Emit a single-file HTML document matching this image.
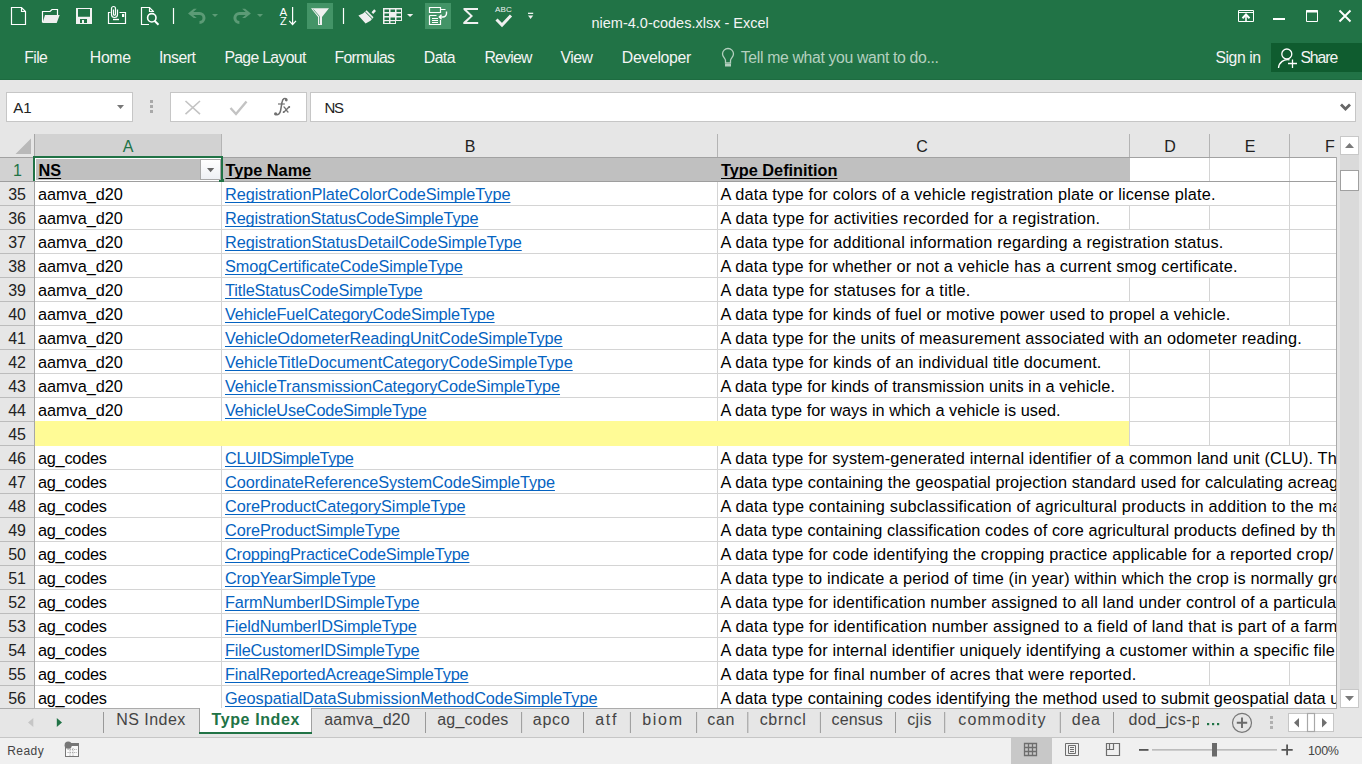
<!DOCTYPE html><html><head><meta charset="utf-8"><style>
*{margin:0;padding:0;box-sizing:border-box}
html,body{width:1362px;height:764px;overflow:hidden;background:#e6e6e6;font-family:"Liberation Sans",sans-serif}
.a{position:absolute}
.t{position:absolute;white-space:pre;line-height:1}
u{text-decoration-skip-ink:none;text-decoration-thickness:1px;text-underline-offset:2px}
svg{position:absolute;left:0;top:0}
</style></head><body><div class="a" style="left:0;top:0;width:1362px;height:80px;background:#217346"></div>
<div class="a" style="left:0;top:79px;width:1362px;height:1px;background:#1d6b40"></div>
<div class="a" style="left:307px;top:3px;width:26px;height:26px;background:#439467"></div>
<div class="a" style="left:425px;top:3px;width:26px;height:26px;background:#439467"></div>
<div class="a" style="left:1271px;top:43px;width:91px;height:29px;background:#0f5c2f"></div>
<svg width="1362" height="80" viewBox="0 0 1362 80">
<g fill="none" stroke="#ffffff" stroke-width="1.2">
 <path d="M11.5 7.5H21.5L25.5 11.5V24.5H11.5Z M21.5 7.5V11.5H25.5"/>
 <path d="M42.5 22.5V11.5H50L52 9.5H57.5V15"/>
 <path d="M110.5 12.5H108.5V23.5H125.5V12.5H119.5"/>
 <path d="M113 19.5H119" stroke-width="1.4"/>
 <path d="M117.5 9.5V14.5A3 3 0 0 1 111.5 14.5V8.5A2 2 0 0 1 115.5 8.5V14.2A1 1 0 0 1 113.5 14.2V9.5"/>
 <path d="M153.5 12V11.5L149.5 7.5H141.5V24.5H149"/>
 <path d="M149.5 7.5V11.5H153.5"/>
 <circle cx="151.8" cy="17.8" r="4.2" stroke-width="1.6"/>
 <path d="M154.5 20.8L158.5 24.8" stroke-width="2"/>
 <path d="M173.5 8V24M343.5 8V24"/>
 <path d="M292.6 7V24.5M289.2 20.8L292.6 24.5L296 20.8"/>
 <path d="M429.5 7.5H440.5V12.5H429.5Z M440.5 9.5H445.5 M429.5 15.5H436.5 M440.5 20V24.5H429.5V15.5 M432 18.5H438 M432 20.5H438 M432 22.5H438"/>
 <path d="M446.5 11.5V13.5A3.5 3.5 0 0 1 443 17H439.5M441.5 14.8L439.3 17L441.5 19.2" stroke-width="1.4"/>
 <path d="M528 13.3H533.2"/>
</g>
<path d="M45 15H59.7L56.7 22.9H42.5Z" fill="#efefef"/>
<path d="M76 8H92V24H76Z M78 9V16.8H90V9Z M80 19V23H82V20H84V23H87V19Z" fill="#f2f2f2" fill-rule="evenodd"/>
<rect x="122" y="14" width="2.2" height="3" fill="#ffffff"/>
<g fill="#5c9b76">
 <path d="M188 13.4L193.8 8.8H196.8L193.2 12H199.5A6 6 0 0 1 199.5 24V21A3 3 0 0 0 199.5 15H193.2L196.8 18H193.8Z"/>
 <path d="M212 14H218L215 17.1Z M257 14H263L260 17.1Z"/>
 <path d="M250.9 13.4L245.1 8.8H242.1L245.7 12H239.4A6 6 0 0 0 239.4 24V21A3 3 0 0 1 239.4 15H245.7L242.1 18H245.1Z"/>
</g>
<path d="M407 14H413.2L410.1 17Z" fill="#f0f0f0"/>
<path d="M528 15.4H533.2L530.6 18.9Z" fill="#f0f0f0"/>
<path d="M311 8.2H329L322 17V25H318V17Z" fill="#f0f0f0"/>
<path d="M313.5 9.5L319.5 16.5V24" stroke="#43956a" stroke-width="0.8" fill="none"/>
<text x="279.5" y="16" font-family="Liberation Sans" font-size="11.5" fill="#ffffff">A</text>
<text x="280" y="25" font-family="Liberation Sans" font-size="11" fill="#ffffff">Z</text>
<path d="M358.4 15.4L363 13.4L366.6 10.3L373.5 17.3L370.5 20.8L365.6 23.4Z M371.5 12.2L374.2 9.2L376 11L373.2 14Z" fill="#f0f0f0"/>
<path d="M365.2 11.8L372 18.6" stroke="#217346" stroke-width="1"/>
<rect x="383" y="8" width="19" height="16" fill="#f0f0f0"/>
<g fill="#217346">
 <rect x="384.5" y="9.5" width="4.5" height="2.5"/><rect x="390.5" y="9.5" width="4.5" height="2.5"/><rect x="396.5" y="9.5" width="4.5" height="2.5"/>
 <rect x="384.5" y="13.5" width="4.5" height="2.5"/><rect x="396.5" y="13.5" width="4.5" height="2.5"/>
 <rect x="384.5" y="17.5" width="4.5" height="2.5"/><rect x="390.5" y="17.5" width="4.5" height="2.5"/><rect x="396.5" y="17.5" width="4.5" height="2.5"/>
 <rect x="384.5" y="21.2" width="4.5" height="1.8"/><rect x="390.5" y="21.2" width="4.5" height="1.8"/>
 <path d="M396 21H402V24H396Z"/>
</g>
<path d="M463.5 8H478V10H466.8L473 16L466.8 22H478.2V24H463.3V22.3L470.2 16L463.5 9.8Z" fill="#f0f0f0"/>
<text x="495" y="11.9" font-family="Liberation Sans" font-size="8" font-weight="400" fill="#f0f0f0" letter-spacing="0.2">ABC</text>
<path d="M496.5 19.5L502 25L511 15.5" stroke="#f0f0f0" stroke-width="3" fill="none"/>
<!-- window controls -->
<g fill="none" stroke="#ffffff" stroke-width="1">
 <path d="M1238.5 10.5H1253.5V21.5H1238.5Z M1238.5 12.5H1253.5"/>
 <path d="M1246 21.5V15.5" stroke-width="1.6"/><path d="M1242.5 18.2L1246 14.5L1249.5 18.2" stroke-width="2"/>
 <path d="M1306.5 10.5H1317.5V21.5H1306.5Z"/>
 <path d="M1306 11.5H1318" stroke-width="2"/>
 <path d="M1339.5 10.5L1350.5 21.5M1350.5 10.5L1339.5 21.5" stroke-width="1.9"/>
</g>
<rect x="1273" y="18" width="12" height="2" fill="#ffffff"/>
<!-- lightbulb -->
<g fill="none" stroke="#b4d0bf" stroke-width="1.3">
 <path d="M725.5 63V60.5C725.5 58.5 722.5 57 722.5 54A5.5 5.5 0 0 1 733.5 54C733.5 57 730.5 58.5 730.5 60.5V63Z"/>
</g>
<rect x="725" y="64" width="6" height="2.5" fill="#b4d0bf"/>
<!-- share person -->
<g fill="none" stroke="#ffffff" stroke-width="1.3">
 <circle cx="1286.8" cy="54" r="5"/>
 <path d="M1278.5 68A9 9 0 0 1 1289.5 59.8"/>
 <path d="M1292.5 59.5V68M1288 63.5H1297"/>
</g>
</svg>
<div class="t" style="left:591.5px;top:15.73px;font-size:14.5px;color:#f4f4f4;font-weight:400;">niem-4.0-codes.xlsx - Excel</div>
<div class="t" style="left:24.3px;top:50.33px;font-size:15.8px;color:#f4f4f4;font-weight:400;letter-spacing:-0.623px;">File</div>
<div class="t" style="left:89.8px;top:49.73px;font-size:15.8px;color:#f4f4f4;font-weight:400;letter-spacing:-0.314px;">Home</div>
<div class="t" style="left:158.9px;top:49.73px;font-size:15.8px;color:#f4f4f4;font-weight:400;letter-spacing:-0.503px;">Insert</div>
<div class="t" style="left:224.4px;top:49.73px;font-size:15.8px;color:#f4f4f4;font-weight:400;letter-spacing:-0.682px;">Page Layout</div>
<div class="t" style="left:334.6px;top:49.73px;font-size:15.8px;color:#f4f4f4;font-weight:400;letter-spacing:-0.778px;">Formulas</div>
<div class="t" style="left:423.8px;top:49.73px;font-size:15.8px;color:#f4f4f4;font-weight:400;letter-spacing:-0.558px;">Data</div>
<div class="t" style="left:484.40000000000003px;top:49.73px;font-size:15.8px;color:#f4f4f4;font-weight:400;letter-spacing:-0.779px;">Review</div>
<div class="t" style="left:560.4px;top:49.73px;font-size:15.8px;color:#f4f4f4;font-weight:400;letter-spacing:-0.490px;">View</div>
<div class="t" style="left:621.8000000000001px;top:49.73px;font-size:15.8px;color:#f4f4f4;font-weight:400;letter-spacing:-0.314px;">Developer</div>
<div class="t" style="left:740.8000000000001px;top:49.73px;font-size:15.8px;color:#b4d0bf;font-weight:400;letter-spacing:-0.342px;">Tell me what you want to do...</div>
<div class="t" style="left:1215.5px;top:49.63px;font-size:15.8px;color:#f4f4f4;font-weight:400;letter-spacing:-0.469px;">Sign in</div>
<div class="t" style="left:1300.3999999999999px;top:49.63px;font-size:15.8px;color:#f4f4f4;font-weight:400;letter-spacing:-1.064px;">Share</div>
<div class="a" style="left:6px;top:92px;width:127px;height:30px;background:#fff;border:1px solid #c6c6c6"></div>
<div class="t" style="left:13.2px;top:100.10px;font-size:15px;color:#222;font-weight:400;">A1</div>
<svg width="1362" height="764" style="left:0;top:0"><path d="M117 105H124L120.5 109Z" fill="#777"/><rect x="150" y="100" width="3" height="3" fill="#a9a9a9"/><rect x="150" y="105" width="3" height="3" fill="#a9a9a9"/><rect x="150" y="110" width="3" height="3" fill="#a9a9a9"/></svg>
<div class="a" style="left:170px;top:92px;width:137px;height:30px;background:#fff;border:1px solid #c6c6c6"></div>
<div class="a" style="left:310px;top:92px;width:1046px;height:30px;background:#fff;border:1px solid #c6c6c6"></div>
<svg width="1362" height="764" style="left:0;top:0"><path d="M185.5 101L200 114.2M200 101L185.5 114.2" stroke="#c3c3c3" stroke-width="1.6" fill="none"/><path d="M230.5 108L236 114L246.5 101.5" stroke="#c3c3c3" stroke-width="2.4" fill="none"/><path d="M1341 104.5L1345.5 109L1350 104.5" stroke="#666" stroke-width="2.8" fill="none"/></svg>
<svg width="1362" height="764" style="left:0;top:0"><g fill="none" stroke="#707070"><path d="M286.6 99.2C285 97.6 282.6 98.4 282 102.5L280.6 110.5C280.1 113.6 277.8 115.6 275.4 114.2" stroke-width="1.5"/><path d="M278 104H284.8" stroke-width="1.2"/><path d="M283.6 106.6C285.2 107.2 286.6 111.4 288.4 112.4M289.6 106.6C288 107.4 285.6 111.2 283.2 112.4" stroke-width="1.3"/></g><g fill="#707070"><circle cx="286.3" cy="100" r="1.4"/><circle cx="275.6" cy="113.8" r="1.6"/><circle cx="289.3" cy="107" r="0.9"/><circle cx="283.6" cy="112.2" r="0.9"/></g></svg>
<div class="t" style="left:324.5px;top:99.90px;font-size:15px;color:#222;font-weight:400;letter-spacing:-1.244px;">NS</div>
<div class="a" style="left:0;top:0;width:1336px;height:708px;overflow:hidden"><div class="a" style="left:35px;top:134px;width:186px;height:23px;background:#d2d2d2"></div>
<div class="a" style="left:221px;top:134px;width:1px;height:23px;background:#b4b4b4"></div>
<div class="a" style="left:717px;top:134px;width:1px;height:23px;background:#b4b4b4"></div>
<div class="a" style="left:1129px;top:134px;width:1px;height:23px;background:#b4b4b4"></div>
<div class="a" style="left:1209px;top:134px;width:1px;height:23px;background:#b4b4b4"></div>
<div class="a" style="left:1289px;top:134px;width:1px;height:23px;background:#b4b4b4"></div>
<div class="a" style="left:0;top:157px;width:1337px;height:1px;background:#a2a2a2"></div>
<svg width="40" height="160" style="left:0;top:0"><path d="M31 138.5V154H15.5Z" fill="#b9b9b9"/></svg>
<div class="t" style="left:108px;width:40px;text-align:center;top:139.46px;font-size:16px;color:#217346">A</div>
<div class="t" style="left:450px;width:40px;text-align:center;top:139.46px;font-size:16px;color:#222">B</div>
<div class="t" style="left:902px;width:40px;text-align:center;top:139.46px;font-size:16px;color:#222">C</div>
<div class="t" style="left:1150px;width:40px;text-align:center;top:139.46px;font-size:16px;color:#222">D</div>
<div class="t" style="left:1230px;width:40px;text-align:center;top:139.46px;font-size:16px;color:#222">E</div>
<div class="t" style="left:1310px;width:40px;text-align:center;top:139.46px;font-size:16px;color:#222">F</div>
<div class="a" style="left:35px;top:158px;width:1301px;height:550px;background:#fff"></div>
<div class="a" style="left:0;top:158px;width:34px;height:550px;background:#e6e6e6"></div>
<div class="a" style="left:0;top:158px;width:34px;height:23px;background:#d2d2d2"></div>
<div class="a" style="left:34px;top:134px;width:1px;height:574px;background:#a6a6a6"></div>
<div class="a" style="left:35px;top:158px;width:1095px;height:23px;background:#c0c0c0"></div>
<div class="a" style="left:1209px;top:158px;width:1px;height:23px;background:#d4d4d4"></div>
<div class="a" style="left:1289px;top:158px;width:1px;height:23px;background:#d4d4d4"></div>
<div class="a" style="left:0px;top:181px;width:1337px;height:1px;background:#9e9e9e"></div>
<div class="t" style="left:13px;top:163.26px;font-size:16px;color:#217346;font-weight:400;">1</div>
<div class="t" style="left:38.5px;top:162.20px;font-size:16.3px;color:#000;font-weight:700;"><u>NS</u></div>
<div class="t" style="left:225.5px;top:162.20px;font-size:16.3px;color:#000;font-weight:700;"><u>Type Name</u></div>
<div class="t" style="left:721px;top:162.20px;font-size:16.3px;color:#000;font-weight:700;"><u>Type Definition</u></div>
<div class="a" style="left:35px;top:205px;width:1301px;height:1px;background:#d4d4d4"></div>
<div class="a" style="left:0px;top:205px;width:34px;height:1px;background:#bcbcbc"></div>
<div class="t" style="left:0;width:26px;text-align:right;top:187.26px;font-size:16px;color:#222">35</div>
<div class="a" style="left:221px;top:182px;width:1px;height:23px;background:#d4d4d4"></div>
<div class="a" style="left:717px;top:182px;width:1px;height:23px;background:#d4d4d4"></div>
<div class="a" style="left:1289px;top:182px;width:1px;height:23px;background:#d4d4d4"></div>
<div class="t" style="left:38px;top:186.40px;font-size:16.3px;color:#000;font-weight:400;letter-spacing:-0.037px;">aamva_d20</div>
<div class="t" style="left:225px;top:186.40px;font-size:16.3px;color:#0563c1;font-weight:400;letter-spacing:-0.040px;"><u>RegistrationPlateColorCodeSimpleType</u></div>
<div class="t" style="left:720.5px;top:186.40px;font-size:16.3px;color:#000;font-weight:400;letter-spacing:0.164px;">A data type for colors of a vehicle registration plate or license plate.</div>
<div class="a" style="left:35px;top:229px;width:1301px;height:1px;background:#d4d4d4"></div>
<div class="a" style="left:0px;top:229px;width:34px;height:1px;background:#bcbcbc"></div>
<div class="t" style="left:0;width:26px;text-align:right;top:211.26px;font-size:16px;color:#222">36</div>
<div class="a" style="left:221px;top:206px;width:1px;height:23px;background:#d4d4d4"></div>
<div class="a" style="left:717px;top:206px;width:1px;height:23px;background:#d4d4d4"></div>
<div class="a" style="left:1129px;top:206px;width:1px;height:23px;background:#d4d4d4"></div>
<div class="a" style="left:1209px;top:206px;width:1px;height:23px;background:#d4d4d4"></div>
<div class="a" style="left:1289px;top:206px;width:1px;height:23px;background:#d4d4d4"></div>
<div class="t" style="left:38px;top:210.40px;font-size:16.3px;color:#000;font-weight:400;letter-spacing:-0.037px;">aamva_d20</div>
<div class="t" style="left:225px;top:210.40px;font-size:16.3px;color:#0563c1;font-weight:400;letter-spacing:-0.114px;"><u>RegistrationStatusCodeSimpleType</u></div>
<div class="t" style="left:720.5px;top:210.40px;font-size:16.3px;color:#000;font-weight:400;letter-spacing:0.226px;">A data type for activities recorded for a registration.</div>
<div class="a" style="left:35px;top:253px;width:1301px;height:1px;background:#d4d4d4"></div>
<div class="a" style="left:0px;top:253px;width:34px;height:1px;background:#bcbcbc"></div>
<div class="t" style="left:0;width:26px;text-align:right;top:235.26px;font-size:16px;color:#222">37</div>
<div class="a" style="left:221px;top:230px;width:1px;height:23px;background:#d4d4d4"></div>
<div class="a" style="left:717px;top:230px;width:1px;height:23px;background:#d4d4d4"></div>
<div class="a" style="left:1289px;top:230px;width:1px;height:23px;background:#d4d4d4"></div>
<div class="t" style="left:38px;top:234.40px;font-size:16.3px;color:#000;font-weight:400;letter-spacing:-0.037px;">aamva_d20</div>
<div class="t" style="left:225px;top:234.40px;font-size:16.3px;color:#0563c1;font-weight:400;letter-spacing:-0.050px;"><u>RegistrationStatusDetailCodeSimpleType</u></div>
<div class="t" style="left:720.5px;top:234.40px;font-size:16.3px;color:#000;font-weight:400;letter-spacing:0.201px;">A data type for additional information regarding a registration status.</div>
<div class="a" style="left:35px;top:277px;width:1301px;height:1px;background:#d4d4d4"></div>
<div class="a" style="left:0px;top:277px;width:34px;height:1px;background:#bcbcbc"></div>
<div class="t" style="left:0;width:26px;text-align:right;top:259.26px;font-size:16px;color:#222">38</div>
<div class="a" style="left:221px;top:254px;width:1px;height:23px;background:#d4d4d4"></div>
<div class="a" style="left:717px;top:254px;width:1px;height:23px;background:#d4d4d4"></div>
<div class="a" style="left:1289px;top:254px;width:1px;height:23px;background:#d4d4d4"></div>
<div class="t" style="left:38px;top:258.40px;font-size:16.3px;color:#000;font-weight:400;letter-spacing:-0.037px;">aamva_d20</div>
<div class="t" style="left:225px;top:258.40px;font-size:16.3px;color:#0563c1;font-weight:400;letter-spacing:-0.072px;"><u>SmogCertificateCodeSimpleType</u></div>
<div class="t" style="left:720.5px;top:258.40px;font-size:16.3px;color:#000;font-weight:400;letter-spacing:0.168px;">A data type for whether or not a vehicle has a current smog certificate.</div>
<div class="a" style="left:35px;top:301px;width:1301px;height:1px;background:#d4d4d4"></div>
<div class="a" style="left:0px;top:301px;width:34px;height:1px;background:#bcbcbc"></div>
<div class="t" style="left:0;width:26px;text-align:right;top:283.26px;font-size:16px;color:#222">39</div>
<div class="a" style="left:221px;top:278px;width:1px;height:23px;background:#d4d4d4"></div>
<div class="a" style="left:717px;top:278px;width:1px;height:23px;background:#d4d4d4"></div>
<div class="a" style="left:1129px;top:278px;width:1px;height:23px;background:#d4d4d4"></div>
<div class="a" style="left:1209px;top:278px;width:1px;height:23px;background:#d4d4d4"></div>
<div class="a" style="left:1289px;top:278px;width:1px;height:23px;background:#d4d4d4"></div>
<div class="t" style="left:38px;top:282.40px;font-size:16.3px;color:#000;font-weight:400;letter-spacing:-0.037px;">aamva_d20</div>
<div class="t" style="left:225px;top:282.40px;font-size:16.3px;color:#0563c1;font-weight:400;letter-spacing:-0.112px;"><u>TitleStatusCodeSimpleType</u></div>
<div class="t" style="left:720.5px;top:282.40px;font-size:16.3px;color:#000;font-weight:400;letter-spacing:0.229px;">A data type for statuses for a title.</div>
<div class="a" style="left:35px;top:325px;width:1301px;height:1px;background:#d4d4d4"></div>
<div class="a" style="left:0px;top:325px;width:34px;height:1px;background:#bcbcbc"></div>
<div class="t" style="left:0;width:26px;text-align:right;top:307.26px;font-size:16px;color:#222">40</div>
<div class="a" style="left:221px;top:302px;width:1px;height:23px;background:#d4d4d4"></div>
<div class="a" style="left:717px;top:302px;width:1px;height:23px;background:#d4d4d4"></div>
<div class="a" style="left:1289px;top:302px;width:1px;height:23px;background:#d4d4d4"></div>
<div class="t" style="left:38px;top:306.40px;font-size:16.3px;color:#000;font-weight:400;letter-spacing:-0.037px;">aamva_d20</div>
<div class="t" style="left:225px;top:306.40px;font-size:16.3px;color:#0563c1;font-weight:400;letter-spacing:-0.139px;"><u>VehicleFuelCategoryCodeSimpleType</u></div>
<div class="t" style="left:720.5px;top:306.40px;font-size:16.3px;color:#000;font-weight:400;letter-spacing:0.170px;">A data type for kinds of fuel or motive power used to propel a vehicle.</div>
<div class="a" style="left:35px;top:349px;width:1301px;height:1px;background:#d4d4d4"></div>
<div class="a" style="left:0px;top:349px;width:34px;height:1px;background:#bcbcbc"></div>
<div class="t" style="left:0;width:26px;text-align:right;top:331.26px;font-size:16px;color:#222">41</div>
<div class="a" style="left:221px;top:326px;width:1px;height:23px;background:#d4d4d4"></div>
<div class="a" style="left:717px;top:326px;width:1px;height:23px;background:#d4d4d4"></div>
<div class="t" style="left:38px;top:330.40px;font-size:16.3px;color:#000;font-weight:400;letter-spacing:-0.037px;">aamva_d20</div>
<div class="t" style="left:225px;top:330.40px;font-size:16.3px;color:#0563c1;font-weight:400;letter-spacing:-0.023px;"><u>VehicleOdometerReadingUnitCodeSimpleType</u></div>
<div class="t" style="left:720.5px;top:330.40px;font-size:16.3px;color:#000;font-weight:400;letter-spacing:0.170px;">A data type for the units of measurement associated with an odometer reading.</div>
<div class="a" style="left:35px;top:373px;width:1301px;height:1px;background:#d4d4d4"></div>
<div class="a" style="left:0px;top:373px;width:34px;height:1px;background:#bcbcbc"></div>
<div class="t" style="left:0;width:26px;text-align:right;top:355.26px;font-size:16px;color:#222">42</div>
<div class="a" style="left:221px;top:350px;width:1px;height:23px;background:#d4d4d4"></div>
<div class="a" style="left:717px;top:350px;width:1px;height:23px;background:#d4d4d4"></div>
<div class="a" style="left:1129px;top:350px;width:1px;height:23px;background:#d4d4d4"></div>
<div class="a" style="left:1209px;top:350px;width:1px;height:23px;background:#d4d4d4"></div>
<div class="a" style="left:1289px;top:350px;width:1px;height:23px;background:#d4d4d4"></div>
<div class="t" style="left:38px;top:354.40px;font-size:16.3px;color:#000;font-weight:400;letter-spacing:-0.037px;">aamva_d20</div>
<div class="t" style="left:225px;top:354.40px;font-size:16.3px;color:#0563c1;font-weight:400;letter-spacing:0.019px;"><u>VehicleTitleDocumentCategoryCodeSimpleType</u></div>
<div class="t" style="left:720.5px;top:354.40px;font-size:16.3px;color:#000;font-weight:400;letter-spacing:0.185px;">A data type for kinds of an individual title document.</div>
<div class="a" style="left:35px;top:397px;width:1301px;height:1px;background:#d4d4d4"></div>
<div class="a" style="left:0px;top:397px;width:34px;height:1px;background:#bcbcbc"></div>
<div class="t" style="left:0;width:26px;text-align:right;top:379.26px;font-size:16px;color:#222">43</div>
<div class="a" style="left:221px;top:374px;width:1px;height:23px;background:#d4d4d4"></div>
<div class="a" style="left:717px;top:374px;width:1px;height:23px;background:#d4d4d4"></div>
<div class="a" style="left:1129px;top:374px;width:1px;height:23px;background:#d4d4d4"></div>
<div class="a" style="left:1209px;top:374px;width:1px;height:23px;background:#d4d4d4"></div>
<div class="a" style="left:1289px;top:374px;width:1px;height:23px;background:#d4d4d4"></div>
<div class="t" style="left:38px;top:378.40px;font-size:16.3px;color:#000;font-weight:400;letter-spacing:-0.037px;">aamva_d20</div>
<div class="t" style="left:225px;top:378.40px;font-size:16.3px;color:#0563c1;font-weight:400;letter-spacing:-0.091px;"><u>VehicleTransmissionCategoryCodeSimpleType</u></div>
<div class="t" style="left:720.5px;top:378.40px;font-size:16.3px;color:#000;font-weight:400;letter-spacing:0.062px;">A data type for kinds of transmission units in a vehicle.</div>
<div class="a" style="left:35px;top:421px;width:1301px;height:1px;background:#d4d4d4"></div>
<div class="a" style="left:0px;top:421px;width:34px;height:1px;background:#bcbcbc"></div>
<div class="t" style="left:0;width:26px;text-align:right;top:403.26px;font-size:16px;color:#222">44</div>
<div class="a" style="left:221px;top:398px;width:1px;height:23px;background:#d4d4d4"></div>
<div class="a" style="left:717px;top:398px;width:1px;height:23px;background:#d4d4d4"></div>
<div class="a" style="left:1129px;top:398px;width:1px;height:23px;background:#d4d4d4"></div>
<div class="a" style="left:1209px;top:398px;width:1px;height:23px;background:#d4d4d4"></div>
<div class="a" style="left:1289px;top:398px;width:1px;height:23px;background:#d4d4d4"></div>
<div class="t" style="left:38px;top:402.40px;font-size:16.3px;color:#000;font-weight:400;letter-spacing:-0.037px;">aamva_d20</div>
<div class="t" style="left:225px;top:402.40px;font-size:16.3px;color:#0563c1;font-weight:400;letter-spacing:-0.163px;"><u>VehicleUseCodeSimpleType</u></div>
<div class="t" style="left:720.5px;top:402.40px;font-size:16.3px;color:#000;font-weight:400;letter-spacing:0.015px;">A data type for ways in which a vehicle is used.</div>
<div class="a" style="left:35px;top:445px;width:1301px;height:1px;background:#d4d4d4"></div>
<div class="a" style="left:0px;top:445px;width:34px;height:1px;background:#bcbcbc"></div>
<div class="t" style="left:0;width:26px;text-align:right;top:427.26px;font-size:16px;color:#222">45</div>
<div class="a" style="left:35px;top:421px;width:1094px;height:25px;background:#fffb96"></div>
<div class="a" style="left:1129px;top:422px;width:1px;height:23px;background:#d4d4d4"></div>
<div class="a" style="left:1209px;top:422px;width:1px;height:23px;background:#d4d4d4"></div>
<div class="a" style="left:1289px;top:422px;width:1px;height:23px;background:#d4d4d4"></div>
<div class="a" style="left:35px;top:469px;width:1301px;height:1px;background:#d4d4d4"></div>
<div class="a" style="left:0px;top:469px;width:34px;height:1px;background:#bcbcbc"></div>
<div class="t" style="left:0;width:26px;text-align:right;top:451.26px;font-size:16px;color:#222">46</div>
<div class="a" style="left:221px;top:446px;width:1px;height:23px;background:#d4d4d4"></div>
<div class="a" style="left:717px;top:446px;width:1px;height:23px;background:#d4d4d4"></div>
<div class="t" style="left:38px;top:450.40px;font-size:16.3px;color:#000;font-weight:400;letter-spacing:-0.246px;">ag_codes</div>
<div class="t" style="left:225px;top:450.40px;font-size:16.3px;color:#0563c1;font-weight:400;letter-spacing:-0.366px;"><u>CLUIDSimpleType</u></div>
<div class="t" style="left:720.5px;top:450.40px;font-size:16.3px;color:#000;font-weight:400;letter-spacing:0.145px;">A data type for system-generated internal identifier of a common land unit (CLU). The identifier</div>
<div class="a" style="left:35px;top:493px;width:1301px;height:1px;background:#d4d4d4"></div>
<div class="a" style="left:0px;top:493px;width:34px;height:1px;background:#bcbcbc"></div>
<div class="t" style="left:0;width:26px;text-align:right;top:475.26px;font-size:16px;color:#222">47</div>
<div class="a" style="left:221px;top:470px;width:1px;height:23px;background:#d4d4d4"></div>
<div class="a" style="left:717px;top:470px;width:1px;height:23px;background:#d4d4d4"></div>
<div class="t" style="left:38px;top:474.40px;font-size:16.3px;color:#000;font-weight:400;letter-spacing:-0.246px;">ag_codes</div>
<div class="t" style="left:225px;top:474.40px;font-size:16.3px;color:#0563c1;font-weight:400;letter-spacing:-0.080px;"><u>CoordinateReferenceSystemCodeSimpleType</u></div>
<div class="t" style="left:720.5px;top:474.40px;font-size:16.3px;color:#000;font-weight:400;letter-spacing:0.112px;">A data type containing the geospatial projection standard used for calculating acreage</div>
<div class="a" style="left:35px;top:517px;width:1301px;height:1px;background:#d4d4d4"></div>
<div class="a" style="left:0px;top:517px;width:34px;height:1px;background:#bcbcbc"></div>
<div class="t" style="left:0;width:26px;text-align:right;top:499.26px;font-size:16px;color:#222">48</div>
<div class="a" style="left:221px;top:494px;width:1px;height:23px;background:#d4d4d4"></div>
<div class="a" style="left:717px;top:494px;width:1px;height:23px;background:#d4d4d4"></div>
<div class="t" style="left:38px;top:498.40px;font-size:16.3px;color:#000;font-weight:400;letter-spacing:-0.246px;">ag_codes</div>
<div class="t" style="left:225px;top:498.40px;font-size:16.3px;color:#0563c1;font-weight:400;letter-spacing:-0.073px;"><u>CoreProductCategorySimpleType</u></div>
<div class="t" style="left:720.5px;top:498.40px;font-size:16.3px;color:#000;font-weight:400;letter-spacing:0.198px;">A data type containing subclassification of agricultural products in addition to the main</div>
<div class="a" style="left:35px;top:541px;width:1301px;height:1px;background:#d4d4d4"></div>
<div class="a" style="left:0px;top:541px;width:34px;height:1px;background:#bcbcbc"></div>
<div class="t" style="left:0;width:26px;text-align:right;top:523.26px;font-size:16px;color:#222">49</div>
<div class="a" style="left:221px;top:518px;width:1px;height:23px;background:#d4d4d4"></div>
<div class="a" style="left:717px;top:518px;width:1px;height:23px;background:#d4d4d4"></div>
<div class="t" style="left:38px;top:522.40px;font-size:16.3px;color:#000;font-weight:400;letter-spacing:-0.246px;">ag_codes</div>
<div class="t" style="left:225px;top:522.40px;font-size:16.3px;color:#0563c1;font-weight:400;letter-spacing:-0.083px;"><u>CoreProductSimpleType</u></div>
<div class="t" style="left:720.5px;top:522.40px;font-size:16.3px;color:#000;font-weight:400;letter-spacing:0.080px;">A data type containing classification codes of core agricultural products defined by the</div>
<div class="a" style="left:35px;top:565px;width:1301px;height:1px;background:#d4d4d4"></div>
<div class="a" style="left:0px;top:565px;width:34px;height:1px;background:#bcbcbc"></div>
<div class="t" style="left:0;width:26px;text-align:right;top:547.26px;font-size:16px;color:#222">50</div>
<div class="a" style="left:221px;top:542px;width:1px;height:23px;background:#d4d4d4"></div>
<div class="a" style="left:717px;top:542px;width:1px;height:23px;background:#d4d4d4"></div>
<div class="t" style="left:38px;top:546.40px;font-size:16.3px;color:#000;font-weight:400;letter-spacing:-0.246px;">ag_codes</div>
<div class="t" style="left:225px;top:546.40px;font-size:16.3px;color:#0563c1;font-weight:400;letter-spacing:-0.147px;"><u>CroppingPracticeCodeSimpleType</u></div>
<div class="t" style="left:720.5px;top:546.40px;font-size:16.3px;color:#000;font-weight:400;letter-spacing:0.162px;">A data type for code identifying the cropping practice applicable for a reported crop/</div>
<div class="a" style="left:35px;top:589px;width:1301px;height:1px;background:#d4d4d4"></div>
<div class="a" style="left:0px;top:589px;width:34px;height:1px;background:#bcbcbc"></div>
<div class="t" style="left:0;width:26px;text-align:right;top:571.26px;font-size:16px;color:#222">51</div>
<div class="a" style="left:221px;top:566px;width:1px;height:23px;background:#d4d4d4"></div>
<div class="a" style="left:717px;top:566px;width:1px;height:23px;background:#d4d4d4"></div>
<div class="t" style="left:38px;top:570.40px;font-size:16.3px;color:#000;font-weight:400;letter-spacing:-0.246px;">ag_codes</div>
<div class="t" style="left:225px;top:570.40px;font-size:16.3px;color:#0563c1;font-weight:400;letter-spacing:-0.156px;"><u>CropYearSimpleType</u></div>
<div class="t" style="left:720.5px;top:570.40px;font-size:16.3px;color:#000;font-weight:400;letter-spacing:0.161px;">A data type to indicate a period of time (in year) within which the crop is normally grown</div>
<div class="a" style="left:35px;top:613px;width:1301px;height:1px;background:#d4d4d4"></div>
<div class="a" style="left:0px;top:613px;width:34px;height:1px;background:#bcbcbc"></div>
<div class="t" style="left:0;width:26px;text-align:right;top:595.26px;font-size:16px;color:#222">52</div>
<div class="a" style="left:221px;top:590px;width:1px;height:23px;background:#d4d4d4"></div>
<div class="a" style="left:717px;top:590px;width:1px;height:23px;background:#d4d4d4"></div>
<div class="t" style="left:38px;top:594.40px;font-size:16.3px;color:#000;font-weight:400;letter-spacing:-0.246px;">ag_codes</div>
<div class="t" style="left:225px;top:594.40px;font-size:16.3px;color:#0563c1;font-weight:400;letter-spacing:-0.131px;"><u>FarmNumberIDSimpleType</u></div>
<div class="t" style="left:720.5px;top:594.40px;font-size:16.3px;color:#000;font-weight:400;letter-spacing:0.171px;">A data type for identification number assigned to all land under control of a particular</div>
<div class="a" style="left:35px;top:637px;width:1301px;height:1px;background:#d4d4d4"></div>
<div class="a" style="left:0px;top:637px;width:34px;height:1px;background:#bcbcbc"></div>
<div class="t" style="left:0;width:26px;text-align:right;top:619.26px;font-size:16px;color:#222">53</div>
<div class="a" style="left:221px;top:614px;width:1px;height:23px;background:#d4d4d4"></div>
<div class="a" style="left:717px;top:614px;width:1px;height:23px;background:#d4d4d4"></div>
<div class="t" style="left:38px;top:618.40px;font-size:16.3px;color:#000;font-weight:400;letter-spacing:-0.246px;">ag_codes</div>
<div class="t" style="left:225px;top:618.40px;font-size:16.3px;color:#0563c1;font-weight:400;letter-spacing:-0.129px;"><u>FieldNumberIDSimpleType</u></div>
<div class="t" style="left:720.5px;top:618.40px;font-size:16.3px;color:#000;font-weight:400;letter-spacing:0.215px;">A data type for identification number assigned to a field of land that is part of a farm</div>
<div class="a" style="left:35px;top:661px;width:1301px;height:1px;background:#d4d4d4"></div>
<div class="a" style="left:0px;top:661px;width:34px;height:1px;background:#bcbcbc"></div>
<div class="t" style="left:0;width:26px;text-align:right;top:643.26px;font-size:16px;color:#222">54</div>
<div class="a" style="left:221px;top:638px;width:1px;height:23px;background:#d4d4d4"></div>
<div class="a" style="left:717px;top:638px;width:1px;height:23px;background:#d4d4d4"></div>
<div class="t" style="left:38px;top:642.40px;font-size:16.3px;color:#000;font-weight:400;letter-spacing:-0.246px;">ag_codes</div>
<div class="t" style="left:225px;top:642.40px;font-size:16.3px;color:#0563c1;font-weight:400;letter-spacing:-0.159px;"><u>FileCustomerIDSimpleType</u></div>
<div class="t" style="left:720.5px;top:642.40px;font-size:16.3px;color:#000;font-weight:400;letter-spacing:0.151px;">A data type for internal identifier uniquely identifying a customer within a specific file</div>
<div class="a" style="left:35px;top:685px;width:1301px;height:1px;background:#d4d4d4"></div>
<div class="a" style="left:0px;top:685px;width:34px;height:1px;background:#bcbcbc"></div>
<div class="t" style="left:0;width:26px;text-align:right;top:667.26px;font-size:16px;color:#222">55</div>
<div class="a" style="left:221px;top:662px;width:1px;height:23px;background:#d4d4d4"></div>
<div class="a" style="left:717px;top:662px;width:1px;height:23px;background:#d4d4d4"></div>
<div class="a" style="left:1209px;top:662px;width:1px;height:23px;background:#d4d4d4"></div>
<div class="a" style="left:1289px;top:662px;width:1px;height:23px;background:#d4d4d4"></div>
<div class="t" style="left:38px;top:666.40px;font-size:16.3px;color:#000;font-weight:400;letter-spacing:-0.246px;">ag_codes</div>
<div class="t" style="left:225px;top:666.40px;font-size:16.3px;color:#0563c1;font-weight:400;letter-spacing:-0.151px;"><u>FinalReportedAcreageSimpleType</u></div>
<div class="t" style="left:720.5px;top:666.40px;font-size:16.3px;color:#000;font-weight:400;letter-spacing:0.232px;">A data type for final number of acres that were reported.</div>
<div class="t" style="left:0;width:26px;text-align:right;top:691.26px;font-size:16px;color:#222">56</div>
<div class="a" style="left:221px;top:686px;width:1px;height:22px;background:#d4d4d4"></div>
<div class="a" style="left:717px;top:686px;width:1px;height:22px;background:#d4d4d4"></div>
<div class="t" style="left:38px;top:690.40px;font-size:16.3px;color:#000;font-weight:400;letter-spacing:-0.246px;">ag_codes</div>
<div class="t" style="left:225px;top:690.40px;font-size:16.3px;color:#0563c1;font-weight:400;letter-spacing:-0.051px;"><u>GeospatialDataSubmissionMethodCodeSimpleType</u></div>
<div class="t" style="left:720.5px;top:690.40px;font-size:16.3px;color:#000;font-weight:400;letter-spacing:0.096px;">A data type containing codes identifying the method used to submit geospatial data using</div></div>
<div class="a" style="left:1336px;top:157px;width:1px;height:552px;background:#ababab"></div>
<div class="a" style="left:0px;top:708px;width:1337px;height:1px;background:#ababab"></div>
<div class="a" style="left:33px;top:156px;width:190px;height:25px;border:2px solid #217346;border-bottom:none"></div>
<div class="a" style="left:35px;top:158px;width:186px;height:23px;border:1px solid #fff;border-right:none"></div>
<div class="a" style="left:219px;top:179px;width:5px;height:3px;background:#217346"></div>
<div class="a" style="left:200px;top:159px;width:21px;height:21px;background:linear-gradient(#fff,#eef0f4);border:1px solid #a8a8a8"></div>
<svg width="230" height="190" style="left:0;top:0"><path d="M207 168H214.2L210.6 172.2Z" fill="#666"/></svg>
<div class="a" style="left:1340px;top:155px;width:19px;height:534px;background:#dadada"></div>
<div class="a" style="left:1340px;top:136px;width:19px;height:19px;background:#fff;border:1px solid #c8c8c8"></div>
<div class="a" style="left:1340px;top:170px;width:19px;height:21px;background:#fff;border:1px solid #a0a0a0"></div>
<div class="a" style="left:1340px;top:689px;width:19px;height:19px;background:#fff;border:1px solid #c8c8c8"></div>
<svg width="1362" height="764" style="left:0;top:0"><path d="M1345 148H1354L1349.5 143Z M1345 696H1354L1349.5 701Z" fill="#7a7a7a"/></svg>
<div class="a" style="left:0;top:709px;width:1362px;height:28px;background:#e6e6e6"></div>
<div class="a" style="left:0;top:737px;width:1362px;height:1px;background:#c6c6c6"></div>
<div class="a" style="left:0;top:738px;width:1362px;height:26px;background:#f0f0f0"></div>
<div class="a" style="left:199px;top:708px;width:113px;height:26px;background:#fff;border-left:1px solid #a0a0a0;border-right:1px solid #a0a0a0"></div>
<div class="a" style="left:199px;top:732px;width:113px;height:2px;background:#217346"></div>
<svg width="1362" height="764" style="left:0;top:0"><path d="M33.3 718V727L28 722.5Z" fill="#c6c6c6"/><path d="M56.8 718V727L62 722.5Z" fill="#217346"/><rect x="103.0" y="712" width="1" height="21" fill="#999999"/><rect x="425.0" y="712" width="1" height="21" fill="#999999"/><rect x="521.1" y="712" width="1" height="21" fill="#999999"/><rect x="583.0" y="712" width="1" height="21" fill="#999999"/><rect x="629.9" y="712" width="1" height="21" fill="#999999"/><rect x="696.1" y="712" width="1" height="21" fill="#999999"/><rect x="747.3" y="712" width="1" height="21" fill="#999999"/><rect x="819.9" y="712" width="1" height="21" fill="#999999"/><rect x="895.0" y="712" width="1" height="21" fill="#999999"/><rect x="944.2" y="712" width="1" height="21" fill="#999999"/><rect x="1059.8" y="712" width="1" height="21" fill="#999999"/><rect x="1113.0" y="712" width="1" height="21" fill="#999999"/><circle cx="1242" cy="722.8" r="9.5" fill="none" stroke="#777" stroke-width="1.2"/><path d="M1242 717.5V728M1236.8 722.8H1247.2" stroke="#6a6a6a" stroke-width="1.9"/><rect x="1270" y="716" width="3" height="3" fill="#b0b0b0"/><rect x="1270" y="721" width="3" height="3" fill="#b0b0b0"/><rect x="1270" y="726" width="3" height="3" fill="#b0b0b0"/><rect x="1288.5" y="713.5" width="45" height="18" fill="#fff" stroke="#c6c6c6"/><rect x="1307.5" y="713.5" width="7" height="18" fill="#fff" stroke="#a8a8a8" stroke-width="1.2"/><path d="M1299 718V727.5L1294 722.8Z M1322 718V727.5L1327 722.8Z" fill="#707070"/><rect x="1011" y="738" width="41" height="26" fill="#c8c8c8"/><g fill="none" stroke="#6d6d6d" stroke-width="1.3"><path d="M1024.5 743.5H1036.5V755.5H1024.5Z M1028.5 743.5V755.5 M1032.5 743.5V755.5 M1024.5 747.5H1036.5 M1024.5 751.5H1036.5"/><path d="M1065.5 743.5H1078.5V755.5H1065.5Z M1068.5 745.5H1075.5V753.5H1068.5Z M1070 747.5H1074 M1070 749.5H1074 M1070 751.5H1074" stroke-width="1"/><path d="M1106.5 743.5H1119.5V755.5H1106.5Z M1106.5 749.5H1113.5V743.5 M1109.5 743.5V749.5" stroke-width="1.2"/></g><rect x="1139" y="749" width="9.5" height="1.8" fill="#555"/><rect x="1152" y="749.4" width="125" height="1" fill="#9a9a9a"/><rect x="1212" y="743" width="5" height="13.5" fill="#6a6a6a"/><path d="M1281.5 749.9H1292.7M1287.1 744.5V755.2" stroke="#555" stroke-width="1.8"/><g><rect x="65.5" y="745.5" width="13" height="11" fill="#fafafa" stroke="#777"/><rect x="70" y="743" width="9" height="3" fill="#777"/><path d="M67.5 749.5H77 M67.5 752.5H77 M70 748V756 M73 748V756" stroke="#999" stroke-width="0.8" stroke-dasharray="1.2 1"/><circle cx="68.2" cy="745.2" r="3.6" fill="#777"/></g></svg>
<div class="t" style="left:116.2px;top:711.66px;font-size:16px;color:#444;font-weight:400;letter-spacing:0.470px;">NS Index</div>
<div class="t" style="left:211.5px;top:711.66px;font-size:16px;color:#217346;font-weight:700;letter-spacing:0.612px;">Type Index</div>
<div class="t" style="left:324.2px;top:711.66px;font-size:16px;color:#444;font-weight:400;letter-spacing:0.259px;">aamva_d20</div>
<div class="t" style="left:437.2px;top:711.66px;font-size:16px;color:#444;font-weight:400;letter-spacing:0.244px;">ag_codes</div>
<div class="t" style="left:532.8000000000001px;top:711.66px;font-size:16px;color:#444;font-weight:400;letter-spacing:0.732px;">apco</div>
<div class="t" style="left:595.2px;top:711.66px;font-size:16px;color:#444;font-weight:400;letter-spacing:1.702px;">atf</div>
<div class="t" style="left:642.2px;top:711.66px;font-size:16px;color:#444;font-weight:400;letter-spacing:1.704px;">biom</div>
<div class="t" style="left:707.2px;top:711.66px;font-size:16px;color:#444;font-weight:400;letter-spacing:0.702px;">can</div>
<div class="t" style="left:759.7px;top:711.66px;font-size:16px;color:#444;font-weight:400;letter-spacing:0.682px;">cbrncl</div>
<div class="t" style="left:831.6px;top:711.66px;font-size:16px;color:#444;font-weight:400;letter-spacing:0.079px;">census</div>
<div class="t" style="left:907.2px;top:711.66px;font-size:16px;color:#444;font-weight:400;letter-spacing:0.364px;">cjis</div>
<div class="t" style="left:958.2px;top:711.66px;font-size:16px;color:#444;font-weight:400;letter-spacing:1.230px;">commodity</div>
<div class="t" style="left:1071.7px;top:711.66px;font-size:16px;color:#444;font-weight:400;letter-spacing:0.798px;">dea</div>
<div class="a" style="left:1128px;top:700px;width:71px;height:36px;overflow:hidden"><div class="t" style="left:0.5px;top:11.66px;font-size:16px;color:#444;font-weight:400;letter-spacing:0.339px;">dod_jcs-pub</div></div>
<svg width="1362" height="764" style="left:0;top:0"><rect x="1207" y="723" width="2.2" height="2.2" fill="#217346"/><rect x="1212" y="723" width="2.2" height="2.2" fill="#217346"/><rect x="1217" y="723" width="2.2" height="2.2" fill="#217346"/></svg>
<div class="t" style="left:7.2px;top:745.34px;font-size:12px;color:#444;font-weight:400;letter-spacing:0.453px;">Ready</div>
<div class="t" style="left:1308px;top:745.12px;font-size:12.5px;color:#444;font-weight:400;letter-spacing:-0.328px;">100%</div>
</body></html>
